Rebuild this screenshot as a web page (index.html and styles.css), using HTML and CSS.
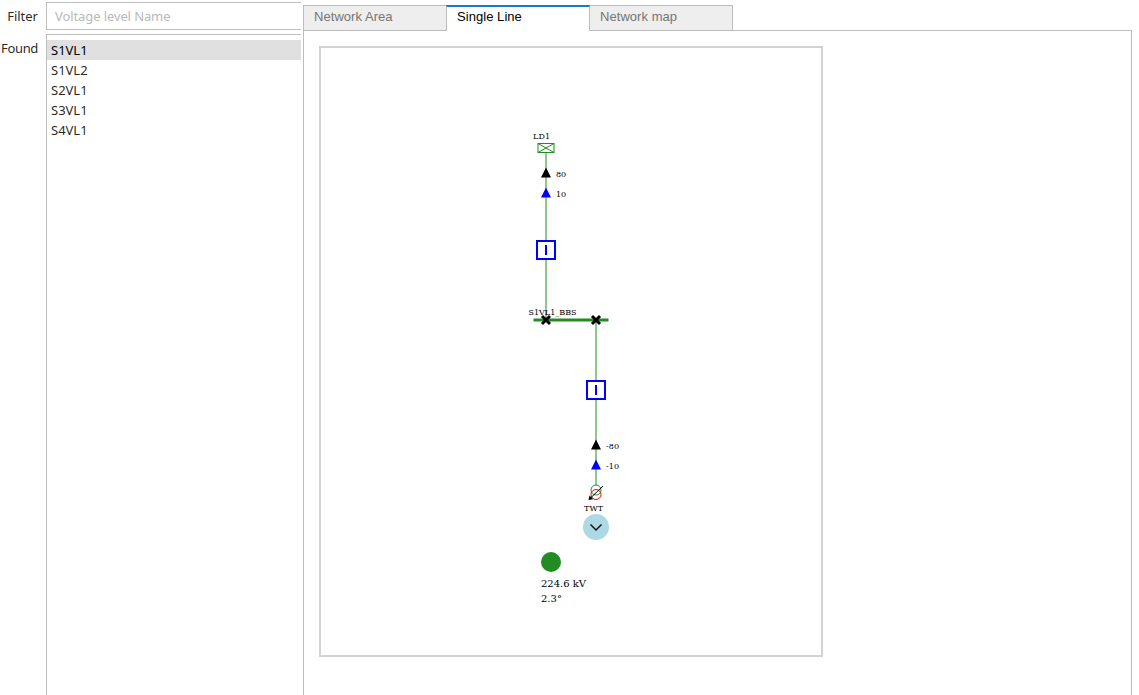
FILE: index.html
```
<!DOCTYPE html>
<html lang="en">
<head>
<meta charset="utf-8">
<title>Network explorer</title>
<link rel="stylesheet" href="styles.css">
</head>
<body>
<div class="app">
  <aside class="sidebar">
    <div class="field field-filter">
      <label class="label" for="filter">Filter</label>
      <input class="filter" id="filter" type="text" placeholder="Voltage level Name">
    </div>
    <div class="field field-found">
      <span class="label"><span class="found-text">Found</span></span>
      <ul class="list">
        <li class="item selected">S1VL1</li>
        <li class="item">S1VL2</li>
        <li class="item">S2VL1</li>
        <li class="item">S3VL1</li>
        <li class="item">S4VL1</li>
      </ul>
    </div>
  </aside>
  <main class="main">
    <nav class="tabs">
      <div class="tab tab-area">Network Area</div>
      <div class="tab current">Single Line</div>
      <div class="tab tab-map">Network map</div>
    </nav>
    <section class="panel">
      <div class="frame">
        <svg class="diagram" viewBox="321 48 500 607" width="500" height="607">
          <g class="wire">
            <path d="M546 153V240M546 260V320M596 320V380M596 400V485"/>
          </g>
          <path class="bus" d="M533.500 320H608.500"/>
          <g class="load">
            <rect x="538" y="143.500" width="16" height="9"/>
            <path d="M538 143.500L554 152.500M554 143.500L538 152.500"/>
          </g>
          <g class="breaker">
            <rect x="537" y="241" width="18" height="18"/>
            <path d="M546 245V255"/>
            <rect x="587" y="381" width="18" height="18"/>
            <path d="M596 385V395"/>
          </g>
          <g class="node">
            <path d="M542 316L550 324M550 316L542 324"/>
            <path d="M592 316L600 324M600 316L592 324"/>
          </g>
          <path class="active" d="M546 167.500L551 177.500H541ZM596 439.500L601 449.500H591Z"/>
          <path class="reactive" d="M546 187.500L551 197.500H541ZM596 459.500L601 469.500H591Z"/>
          <circle class="winding-a" cx="596" cy="490" r="5"/>
          <circle class="winding-b" cx="596" cy="494.500" r="5"/>
          <path class="tap" d="M603 486L590 498.500"/>
          <path class="tap-head" d="M588.500 500L589.500 495.500L593.300 499.300Z"/>
          <circle class="next" cx="596" cy="527" r="13"/>
          <path class="chevron" d="M590.500 524.500L596 530L601.500 524.500"/>
          <circle class="state" cx="551" cy="562" r="10"/>
          <g class="small">
            <text x="533" y="139" textLength="17">LD1</text>
            <text x="556" y="177" textLength="10">80</text>
            <text x="556" y="197" textLength="10">10</text>
            <text x="528.500" y="315" textLength="48">S1VL1_BBS</text>
            <text x="606" y="449" textLength="13">-80</text>
            <text x="606" y="469" textLength="13">-10</text>
            <text x="584" y="511" textLength="19">TWT</text>
          </g>
          <g class="legend">
            <text x="541" y="587">224.6 kV</text>
            <text x="541" y="602">2.3°</text>
          </g>
        </svg>
      </div>
    </section>
  </main>
</div>
</body>
</html>
```
FILE: styles.css
```
* { box-sizing: border-box; }
body { margin: 0; background: #fff; overflow: hidden; }
.app { display: flex; gap: 2px; width: 1132px; height: 695px; }
.sidebar {
  display: flex; flex-direction: column; gap: 4px;
  width: 301px; padding-top: 2px; overflow: hidden;
  font: 13px/20px "Noto Sans", sans-serif; color: rgba(0, 0, 0, .87);
}
.field { display: grid; grid-template-columns: 38px 263px; column-gap: 8px; }
.field-filter { height: 28px; }
.field-found { flex: 1; }
.label { text-align: right; line-height: 29px; }
.found-text { letter-spacing: -.35px; }
.filter {
  height: 28px; padding: 0 8px; border: 1px solid #bdbdbd; border-radius: 0;
  background: #fff; font: inherit; color: inherit; letter-spacing: -.1px; outline: 0;
}
.filter::placeholder { color: #b9b9b9; opacity: 1; }
.list { margin: 0; padding: 5px 0 0; list-style: none; border: solid #bdbdbd; border-width: 1px 0 0 1px; }
.item { height: 20px; padding-left: 4px; letter-spacing: 0; }
.selected { background: #e0e0e0; color: #000; }
.main { display: flex; flex-direction: column; width: 829px; padding-top: 5px; }
.tabs { display: flex; position: relative; z-index: 1; height: 26px; margin-bottom: -1px; }
.tab {
  width: 144px; height: 26px; margin-right: -1px; padding: 0 10px;
  border: 1px solid #bdbdbd; background: #eee; color: #757575;
  font: 13px/22px "Liberation Sans", Arial, sans-serif; letter-spacing: .05px;
}
.current {
  position: relative; z-index: 1; background: #fff; color: #000;
  border-top: 2px solid #1976d2; border-bottom: 0; line-height: 20px;
}
.panel { flex: 1; padding: 15px; border: 1px solid #bdbdbd; border-bottom: 0; }
.frame { width: 504px; height: 611px; border: 2px solid #d3d3d3; }
.diagram { display: block; font-family: "DejaVu Serif", serif; }
.wire { stroke: #228b22; fill: none; }
.bus { stroke: #228b22; stroke-width: 3; }
.load { stroke: #228b22; fill: none; }
.breaker { stroke: #00f; stroke-width: 2; fill: #fff; }
.node { stroke: #000; stroke-width: 3; }
.active { fill: #000; }
.reactive { fill: #00f; }
.winding-a { stroke: #228b22; fill: none; }
.winding-b { stroke: #f00; fill: none; }
.tap { stroke: #000; fill: none; }
.tap-head { fill: #000; }
.next { fill: #add8e6; }
.chevron { stroke: #111; stroke-width: 1.5; fill: none; }
.state { fill: #228b22; }
.small { font-size: 8px; }
.legend { font-size: 10px; }
```
